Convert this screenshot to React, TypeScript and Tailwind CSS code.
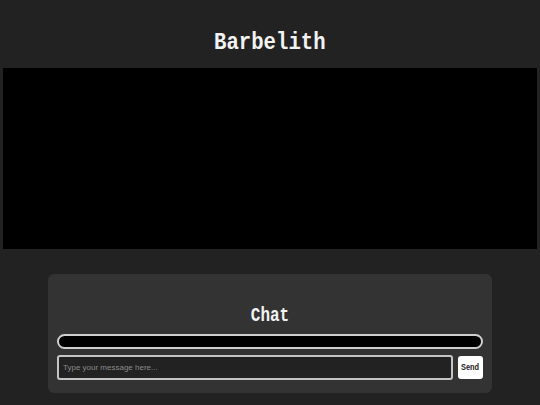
import React, { useState } from 'react';

export default function App() {
  const [message, setMessage] = useState('');

  return (
    <div className="min-h-[405px] w-full bg-[#222222] flex flex-col items-center font-['Liberation_Mono',monospace]">
      <h1 className="mt-[28px] h-[30px] leading-[30px] text-[24px] font-bold text-[#f2f2f2]">
        <span className="inline-block scale-x-[0.86]">Barbelith</span>
      </h1>

      <div className="mt-[10px] w-[534px] h-[181px] bg-black" />

      <div className="mt-[25px] w-[444px] rounded-md bg-[#333333] px-[9px] pt-[30px] pb-[13px]">
        <h2 className="h-[24px] leading-[24px] text-center text-[20px] font-bold text-[#f2f2f2]">
          <span className="inline-block scale-x-[0.8]">Chat</span>
        </h2>

        <div className="mt-[6px] h-[15px] rounded-full border-2 border-[#cfcfcf] bg-black" />

        <div className="mt-[6px] flex items-center gap-[5px]">
          <input
            type="text"
            value={message}
            onChange={(e) => setMessage(e.target.value)}
            placeholder="Type your message here..."
            className="flex-1 h-[25px] rounded-[3px] border-2 border-[#c4c4c4] bg-[#222222] px-[4px] text-[8px] text-white placeholder:text-[#8a8a8a] outline-none font-['Liberation_Sans',sans-serif]"
          />
          <button
            type="button"
            className="w-[25px] h-[23px] rounded-[3px] bg-white text-[9px] font-bold text-[#222222] font-['Liberation_Sans',sans-serif]"
          >
            <span className="inline-block scale-x-[0.82]">Send</span>
          </button>
        </div>
      </div>
    </div>
  );
}
